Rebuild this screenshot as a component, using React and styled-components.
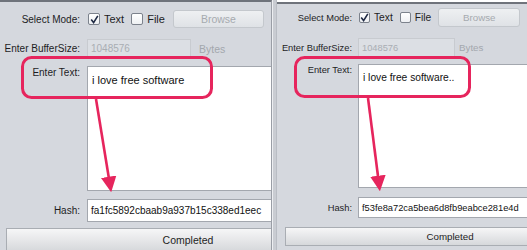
import React from 'react';
import styled, { createGlobalStyle } from 'styled-components';

const GlobalStyle = createGlobalStyle`
	html, body {
		margin: 0;
		padding: 0;
		background: #ffffff;
	}
	body {
		font-family: "Liberation Sans", Arial, sans-serif;
	}
`;

const Page = styled.div`
	position: relative;
	width: 527px;
	height: 250px;
	display: flex;
	flex-direction: row;
	overflow: hidden;
	background: #ffffff;
`;

const Panel = styled.div`
	width: ${(p) => p.w}px;
	height: ${(p) => 250 - p.top}px;
	margin-top: ${(p) => p.top}px;
	box-sizing: border-box;
	border-top: 2px solid #6f737b;
	border-right: ${(p) => (p.edge ? '1px solid #9a9ea6' : 'none')};
	background: #d5d8de;
	overflow: hidden;
	display: flex;
	flex-direction: column;
	padding-top: ${(p) => p.padTop}px;
	font-size: ${(p) => p.fs}px;
	color: #1d1d1f;
	flex-shrink: 0;
`;

const Divider = styled.div`
	width: 5px;
	box-sizing: border-box;
	border-left: 1px solid #eceef1;
	border-right: 1px solid #b9bdc4;
	background: #c9ccd2;
	flex-shrink: 0;
`;

const Row = styled.div`
	display: flex;
	flex-direction: row;
	align-items: ${(p) => (p.top ? 'flex-start' : 'center')};
	height: ${(p) => p.h}px;
	margin-top: ${(p) => p.mt || 0}px;
	flex-shrink: 0;
`;

const Label = styled.div`
	width: ${(p) => p.w}px;
	flex-shrink: 0;
	text-align: right;
	white-space: nowrap;
	padding-top: ${(p) => p.pt || 0}px;
	margin-right: ${(p) => p.gap}px;
`;

const CheckBox = styled.span`
	display: inline-flex;
	align-items: center;
	justify-content: center;
	width: ${(p) => p.size}px;
	height: ${(p) => p.size}px;
	box-sizing: border-box;
	border: 1px solid #7c828c;
	border-radius: 2px;
	background: linear-gradient(#ffffff, #eef0f3);
	margin-left: ${(p) => p.ml || 0}px;
	margin-right: 4px;
	flex-shrink: 0;
`;

const CheckText = styled.span`
	font-size: 1.1em;
	white-space: nowrap;
`;

const BrowseButton = styled.div`
	width: ${(p) => p.w}px;
	height: ${(p) => p.h}px;
	margin-left: ${(p) => p.ml}px;
	box-sizing: border-box;
	border: 1px solid #c4c8cd;
	border-radius: 3px;
	background: linear-gradient(#eef0f2, #dfe2e6);
	color: #a6aaaf;
	display: flex;
	align-items: center;
	justify-content: center;
	font-size: 1.05em;
	flex-shrink: 0;
`;

const Field = styled.div`
	width: ${(p) => p.w}px;
	height: ${(p) => p.h}px;
	box-sizing: border-box;
	flex-shrink: 0;
	border: 1px solid ${(p) => (p.disabled ? '#c8cbd0' : '#a3a7ae')};
	background: ${(p) => (p.disabled ? '#dcdfe4' : '#ffffff')};
	color: ${(p) => (p.disabled ? '#a9adb3' : '#111111')};
	padding: ${(p) => (p.area ? '7px 4px' : '0 3px')};
	display: flex;
	align-items: ${(p) => (p.area ? 'flex-start' : 'center')};
	white-space: nowrap;
	overflow: hidden;
	font-size: ${(p) => (p.area ? '1.1em' : '1em')};
`;

const Unit = styled.span`
	margin-left: ${(p) => p.ml}px;
	color: #a3a7ad;
	font-size: 1.05em;
`;

const ProgressBar = styled.div`
	width: ${(p) => p.w}px;
	height: ${(p) => p.h}px;
	margin-left: ${(p) => p.ml}px;
	box-sizing: border-box;
	flex-shrink: 0;
	border: 1px solid #a9adb3;
	background: linear-gradient(#f6f6f7, #e6e7e9 50%, #d6d8db);
	display: flex;
	align-items: center;
	justify-content: center;
	font-size: 1.05em;
	color: #1e1e1e;
`;

const Overlay = styled.svg`
	position: absolute;
	left: 0;
	top: 0;
	pointer-events: none;
`;

const Check = () => (
	<svg width="9" height="9" viewBox="0 0 9 9">
		<path d="M1.2 4.6 L3.6 7.6 L7.8 0.8" fill="none" stroke="#1f2a44" strokeWidth="1.6" />
	</svg>
);

const HashPanel = ({ cfg, text, hash }) => (
	<Panel w={cfg.w} top={cfg.top} padTop={cfg.padTop} fs={cfg.fs} edge={cfg.edge}>
		<Row h={cfg.r1}>
			<Label w={cfg.lw} gap={cfg.gap}>Select Mode:</Label>
			<CheckBox size={cfg.cb} ml={cfg.cbMl}><Check /></CheckBox>
			<CheckText>Text</CheckText>
			<CheckBox size={cfg.cb} ml={cfg.cb2Ml} />
			<CheckText>File</CheckText>
			<BrowseButton w={cfg.bw} h={cfg.r1} ml={cfg.bMl}>Browse</BrowseButton>
		</Row>
		<Row h={cfg.r2} mt={cfg.g1}>
			<Label w={cfg.lw} gap={cfg.gap}>Enter BufferSize:</Label>
			<Field disabled w={cfg.fw} h={cfg.r2}>1048576</Field>
			<Unit ml={cfg.uMl}>Bytes</Unit>
		</Row>
		<Row h={cfg.r3} mt={cfg.g2} top>
			<Label w={cfg.lw} gap={cfg.gap} pt={cfg.lpt}>Enter Text:</Label>
			<Field area w={300} h={cfg.r3}>{text}</Field>
		</Row>
		<Row h={cfg.r4} mt={cfg.g3}>
			<Label w={cfg.lw} gap={cfg.gap}>Hash:</Label>
			<Field w={300} h={cfg.r4}>{hash}</Field>
		</Row>
		<Row h={cfg.r5} mt={cfg.g4}>
			<ProgressBar w={cfg.pw} h={cfg.r5} ml={cfg.pMl}>Completed</ProgressBar>
		</Row>
	</Panel>
);

const leftCfg = {
	w: 272, top: 0, padTop: 8, fs: 10, edge: true,
	lw: 80, gap: 7, cb: 12, cbMl: 1, cb2Ml: 7, bw: 91, bMl: 8,
	fw: 104, uMl: 8, lpt: 1, pw: 364, pMl: 6,
	r1: 18, g1: 11, r2: 19, g2: 8, r3: 125, g3: 8, r4: 23, g4: 6, r5: 24,
};

const rightCfg = {
	w: 250, top: 2, padTop: 4, fs: 9.3, edge: false,
	lw: 75, gap: 6, cb: 11, cbMl: 1, cb2Ml: 7, bw: 82, bMl: 7,
	fw: 97, uMl: 4, lpt: 1, pw: 330, pMl: 8,
	r1: 19, g1: 11, r2: 19, g2: 7, r3: 124, g3: 9, r4: 21, g4: 9, r5: 19,
};

const RED = '#e6255d';

const Annotations = () => (
	<Overlay width="527" height="250" viewBox="0 0 527 250">
		<defs>
			<marker id="head" markerWidth="6" markerHeight="6" refX="3.2" refY="3" orient="auto" markerUnits="strokeWidth">
				<path d="M0 0 L6 3 L0 6 Z" fill={RED} />
			</marker>
		</defs>
		<rect x="22.5" y="57.5" width="189" height="40" rx="9" fill="none" stroke={RED} strokeWidth="3" />
		<rect x="295.5" y="57.5" width="174" height="39" rx="9" fill="none" stroke={RED} strokeWidth="3" />
		<line x1="96" y1="99" x2="110" y2="185" stroke={RED} strokeWidth="2.6" markerEnd="url(#head)" />
		<line x1="368" y1="98" x2="379" y2="184" stroke={RED} strokeWidth="2.6" markerEnd="url(#head)" />
	</Overlay>
);

export default function App() {
	return (
		<>
			<GlobalStyle />
			<Page>
				<HashPanel cfg={leftCfg} text="i love free software" hash="fa1fc5892cbaab9a937b15c338ed1eec" />
				<Divider />
				<HashPanel cfg={rightCfg} text="i love free software.." hash="f53fe8a72ca5bea6d8fb9eabce281e4d" />
				<Annotations />
			</Page>
		</>
	);
}
